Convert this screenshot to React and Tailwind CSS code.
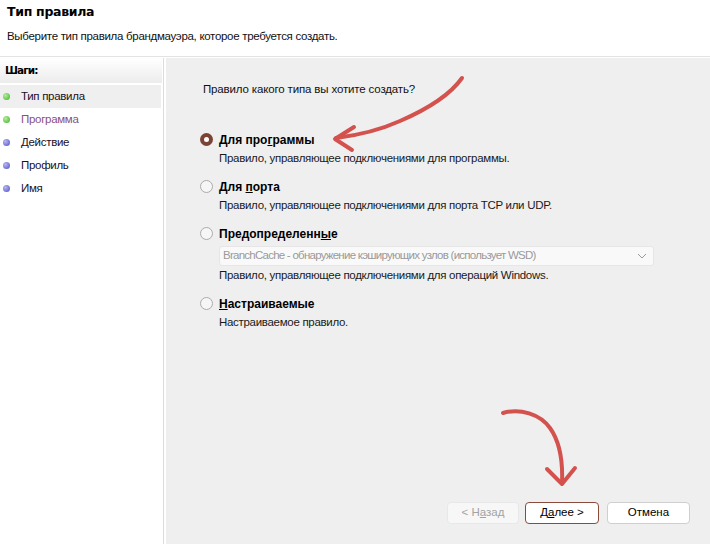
import React from 'react';

const steps = [
  { label: 'Тип правила', done: true, active: true },
  { label: 'Программа', done: true },
  { label: 'Действие' },
  { label: 'Профиль' },
  { label: 'Имя' },
];

function Dot({ green }) {
  return (
    <span
      className={`inline-block w-[7px] h-[7px] rounded-full ${
        green
          ? 'bg-[radial-gradient(circle_at_35%_35%,#b6ef9c,#3fae2a)]'
          : 'bg-[radial-gradient(circle_at_35%_35%,#b7b7f2,#4e4ec2)]'
      }`}
    />
  );
}

function Radio({ checked }) {
  if (checked) {
    return (
      <span className="w-[13px] h-[13px] rounded-full bg-[#7b4333] flex items-center justify-center shrink-0">
        <span className="w-[5px] h-[5px] rounded-full bg-white" />
      </span>
    );
  }
  return <span className="w-[13px] h-[13px] rounded-full border border-[#ababab] bg-[#f6f6f6] shrink-0" />;
}

function Option({ checked, label, desc, children }) {
  return (
    <div className="flex flex-col">
      <div className="flex items-center gap-[6px] h-[19px]">
        <Radio checked={checked} />
        <span className="font-bold text-[12px] text-black">{label}</span>
      </div>
      {children}
      <div className="pl-[19px] text-[11.5px] tracking-[-0.3px] text-[#1a1a1a] h-[18px] leading-[18px]">{desc}</div>
    </div>
  );
}

function Arrows() {
  return (
    <svg className="absolute left-0 top-0 pointer-events-none" width="710" height="544" fill="none">
      <g stroke="#d4524e" strokeWidth="4" strokeLinecap="round" strokeLinejoin="round">
        <path d="M462 78 C450 95 430 108 400 121 C380 130 360 135 336 138" />
        <path d="M354 127 L335 139 L352 150" />
        <path d="M503 413 C520 408 540 414 550 428 C560 442 563 460 562 483" />
        <path d="M547 469 L562 484 L575 468" />
      </g>
    </svg>
  );
}

export default function App() {
  return (
    <div className="relative w-[710px] h-[544px] flex flex-col bg-white overflow-hidden font-['Liberation_Sans',Arial,sans-serif] text-black">
      <div className="h-[57px] border-b border-[#e3e3e3] px-[7px] pt-[3px] shrink-0">
        <div className="font-['DejaVu_Sans',Tahoma,sans-serif] font-bold text-[12.5px] tracking-[-0.3px] leading-[18px]">Тип правила</div>
        <div className="text-[11.5px] tracking-[-0.3px] mt-[8px] leading-[14px] text-[#111]">
          Выберите тип правила брандмауэра, которое требуется создать.
        </div>
      </div>

      <div className="flex flex-1 pt-[1px]">
        <div className="w-[164px] border-r border-[#dcdcdc] shrink-0 pr-[1px]">
          <div className="h-[25px] flex items-center pl-[5px] bg-[linear-gradient(#ffffff,#ececec)] font-['DejaVu_Sans',Tahoma,sans-serif] font-bold text-[10.5px] tracking-[-0.9px]">
            Шаги:
          </div>
          <div className="flex flex-col mt-[2px]">
            {steps.map((s) => (
              <div
                key={s.label}
                className={`h-[23px] flex items-center pl-[3px] gap-[11px] text-[11.5px] tracking-[-0.3px] ${
                  s.active ? 'bg-[#efefef] mr-[1px]' : ''
                } ${s.label === 'Программа' ? 'text-[#8a4f7d]' : 'text-[#1a1026]'}`}
              >
                <Dot green={s.done} />
                <span>{s.label}</span>
              </div>
            ))}
          </div>
        </div>

        <div className="flex-1 ml-[2px] bg-[#efefef] flex flex-col pl-[34px] pr-[20px] pb-[20px] pt-[24px]">
          <div className="pl-[3px] text-[11.5px] tracking-[-0.15px] text-[#111] h-[14px] leading-[14px]">
            Правило какого типа вы хотите создать?
          </div>

          <div className="flex flex-col gap-[10px] mt-[34px]">
            <Option
              checked
              label={<>Для про<u>г</u>раммы</>}
              desc="Правило, управляющее подключениями для программы."
            />
            <Option
              label={<>Для <u>п</u>орта</>}
              desc="Правило, управляющее подключениями для порта TCP или UDP."
            />
            <Option
              label={<>Предопределенн<u>ы</u>е</>}
              desc="Правило, управляющее подключениями для операций Windows."
            >
              <div className="ml-[19px] mt-[3px] w-[435px] h-[20px] bg-[#f9f9f9] border border-[#e6e6e6] rounded-[3px] flex items-center justify-between pl-[3px] pr-[6px] text-[11.5px] tracking-[-0.75px] text-[#9a9a9a]">
                <span>BranchCache - обнаружение кэширующих узлов (использует WSD)</span>
                <svg width="10" height="6" viewBox="0 0 10 6">
                  <path d="M1 1 L5 5 L9 1" stroke="#9a9a9a" strokeWidth="1" fill="none" />
                </svg>
              </div>
            </Option>
            <Option
              label={<><u>Н</u>астраиваемые</>}
              desc="Настраиваемое правило."
            />
          </div>

          <div className="mt-auto flex justify-end gap-[6px] text-[11.5px]">
            <button className="w-[72px] h-[22px] rounded-[4px] border border-[#e8e8e8] bg-[#f7f7f7] text-[#a3a3a3]">
              &lt; Н<u>а</u>зад
            </button>
            <button className="w-[74px] h-[22px] rounded-[4px] border border-[#8a4a3c] bg-white text-black">
              Д<u>а</u>лее &gt;
            </button>
            <button className="w-[83px] h-[22px] ml-[2px] rounded-[4px] border border-[#cfcfcf] bg-white text-black">
              Отмена
            </button>
          </div>
        </div>
      </div>

      <Arrows />
    </div>
  );
}
